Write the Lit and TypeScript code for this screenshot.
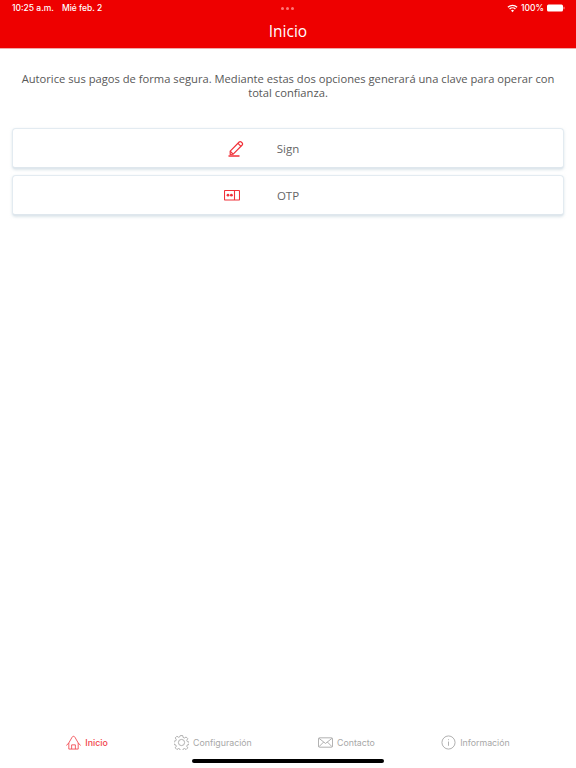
import { LitElement, html, css, svg } from "lit";
import { customElement } from "lit/decorators.js";

const RED = "#f0323a";

@customElement("app-root")
export class AppRoot extends LitElement {
  static styles = css`
    :host {
      display: flex;
      flex-direction: column;
      height: 768px;
      width: 576px;
      background: #fff;
      position: relative;
      overflow: hidden;
      font-family: "Open Sans", sans-serif;
    }
    .header {
      background: #ee0000;
      height: 48px;
      border-bottom: 1px solid #f0a9a9;
      color: #fff;
      display: flex;
      flex-direction: column;
    }
    .status {
      height: 16px;
      display: flex;
      align-items: center;
      justify-content: space-between;
      padding: 0 11px 0 12px;
      font-family: Inter, sans-serif;
      font-size: 8.5px;
      font-weight: 500;
      position: relative;
    }
    .status .left { display: flex; gap: 8px; }
    .status .right { display: flex; align-items: center; gap: 3px; }
    .dots {
      position: absolute;
      left: 281px;
      top: 7px;
      display: flex;
      gap: 2px;
    }
    .dots i {
      width: 3px;
      height: 3px;
      border-radius: 50%;
      background: #f77;
      display: block;
    }
    .title {
      flex: 1;
      display: flex;
      justify-content: center;
      align-items: center;
      font-size: 15.5px;
      padding-bottom: 2px;
    }
    .intro {
      margin: 0;
      padding: 23px 12px 0;
      font-size: 11.2px;
      line-height: 14px;
      text-align: center;
      color: #585858;
    }
    .list {
      display: flex;
      flex-direction: column;
      gap: 6px;
      padding: 28px 12px 0;
    }
    .card {
      height: 41px;
      box-sizing: border-box;
      border: 1px solid #e3ebf1;
      border-bottom: 2px solid #dfe7ed;
      border-radius: 4px;
      box-shadow: 0 1px 3px rgba(190, 205, 215, 0.55);
      position: relative;
      display: flex;
      align-items: center;
      justify-content: center;
      font-size: 11.5px;
      color: #666;
      background: #fff;
    }
    .card svg {
      position: absolute;
      display: block;
    }
    .sign-icon { left: 214px; top: 11px; }
    .otp-icon { left: 211px; top: 14px; }
    .spacer { flex: 1; }
    .tabs {
      height: 38px;
      display: flex;
      justify-content: space-evenly;
      margin-bottom: 7px;
      font-family: Inter, sans-serif;
      font-size: 8.8px;
      color: #a8a8a8;
    }
    .tab {
      display: flex;
      align-items: center;
      gap: 4px;
    }
    .tab.on { color: #f1444b; font-weight: 500; }
    .tab svg { display: block; }
    .home {
      position: absolute;
      left: 192px;
      top: 759px;
      width: 192px;
      height: 3.5px;
      border-radius: 2px;
      background: #000;
    }
  `;

  render() {
    return html`
      <div class="header">
        <div class="status">
          <div class="left"><span>10:25 a.m.</span><span>Mié feb. 2</span></div>
          <div class="dots"><i></i><i></i><i></i></div>
          <div class="right">
            <svg width="11" height="9" viewBox="0 0 12 9" fill="none" stroke="#fff" stroke-width="1.4">
              <path d="M1 3.2a7 7 0 0 1 10 0M2.800 5a4.600 4.600 0 0 1 6.400 0" />
              <path d="M6 8.600 4.400 6.700a2.300 2.300 0 0 1 3.200 0Z" fill="#fff" stroke="none" />
            </svg>
            <span>100%</span>
            <svg width="18" height="8" viewBox="0 0 18 8">
              <rect x="0" y="0.500" width="16" height="7" rx="1.500" fill="#fff" />
              <rect x="16.500" y="2.800" width="1" height="2.400" fill="#f9a0a0" />
            </svg>
          </div>
        </div>
        <div class="title">Inicio</div>
      </div>
      <p class="intro">
        Autorice sus pagos de forma segura. Mediante estas dos opciones generará una clave para operar con total confianza.
      </p>
      <div class="list">
        <div class="card">
          <svg class="sign-icon" width="18" height="18" viewBox="0 0 18 18" fill="none" stroke="${RED}" stroke-width="1.2">
            <path d="M3.200 11.200 12.200 2a1.400 1.400 0 0 1 2 0l1 1a1.400 1.400 0 0 1 0 2L6.200 14.200l-3 .3Z" stroke-linejoin="round" />
            <path d="M11 3.400l3 3M3.200 11.200l3 3" />
            <path d="M1.500 16H12.500" stroke-width="1.800" opacity=".85" />
          </svg>
          Sign
        </div>
        <div class="card">
          <svg class="otp-icon" width="16" height="11" viewBox="0 0 16 11" fill="none" stroke="${RED}" stroke-width="1.1">
            <rect x="0.500" y="0.500" width="15" height="9.500" rx="0.800" />
            <path d="M10.500 0.500v9.500" />
            <circle cx="4" cy="5.200" r="1.400" fill="${RED}" stroke="none" />
            <circle cx="7.400" cy="5.200" r="1.400" fill="${RED}" stroke="none" />
          </svg>
          OTP
        </div>
      </div>
      <div class="spacer"></div>
      <div class="tabs">
        ${this.tab("Inicio", true, svg`
          <path d="M.6 11 3 8.400 6.600 2.200a1.600 1.600 0 0 1 2.800 0L13 8.400 15.400 11" stroke-linecap="round" stroke-linejoin="round"/>
          <path d="M3 8.400V15H13V8.400M6 15V10.500H10V15" stroke-linejoin="round"/>`, "#f1444b")}
        ${this.tab("Configuración", false, svg`
          <path d="M6.700.6h2.600l.4 2 1.500.6 1.700-1.100 1.800 1.800-1.100 1.700.6 1.500 2 .4v2.600l-2 .4-.6 1.500 1.100 1.700-1.800 1.800-1.700-1.100-1.500.6-.4 2H6.700l-.4-2-1.500-.6-1.700 1.100-1.800-1.800 1.100-1.700-.6-1.500-2-.4V6.700l2-.4.6-1.500-1.100-1.700 1.800-1.800 1.700 1.100 1.500-.6Z" stroke-linejoin="round"/>
          <circle cx="8" cy="8" r="3.300"/>`, "#a3a3a3")}
        ${this.tab("Contacto", false, svg`
          <rect x=".5" y="3" width="15" height="10" rx="1"/>
          <path d="M1 3.500 8 9l7-5.500M1 12.500 6 7.500M15 12.500 10 7.500"/>`, "#a3a3a3")}
        ${this.tab("Información", false, svg`
          <circle cx="8" cy="8" r="7"/>
          <path d="M8 7V11.500M8 4.500V5.500"/>`, "#a3a3a3")}
      </div>
      <div class="home"></div>
    `;
  }

  tab(label: string, on: boolean, icon: unknown, color: string) {
    return html`<div class="tab ${on ? "on" : ""}">
      <svg width="15" height="15" viewBox="0 0 16 16" fill="none" stroke="${color}" stroke-width=".9">${icon}</svg>
      <span>${label}</span>
    </div>`;
  }
}
